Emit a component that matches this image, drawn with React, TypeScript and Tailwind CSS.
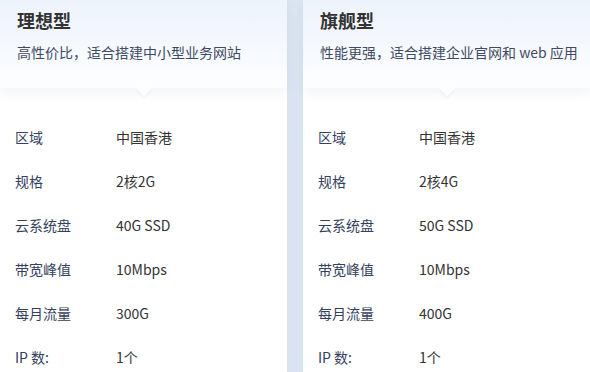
import React from "react";

type Plan = { title: string; desc: string; rows: [string, string][] };

const plans: Plan[] = [
  {
    title: "理想型",
    desc: "高性价比，适合搭建中小型业务网站",
    rows: [
      ["区域", "中国香港"],
      ["规格", "2核2G"],
      ["云系统盘", "40G SSD"],
      ["带宽峰值", "10Mbps"],
      ["每月流量", "300G"],
      ["IP 数:", "1个"],
    ],
  },
  {
    title: "旗舰型",
    desc: "性能更强，适合搭建企业官网和 web 应用",
    rows: [
      ["区域", "中国香港"],
      ["规格", "2核4G"],
      ["云系统盘", "50G SSD"],
      ["带宽峰值", "10Mbps"],
      ["每月流量", "400G"],
      ["IP 数:", "1个"],
    ],
  },
];

function Card({ plan }: { plan: Plan }) {
  return (
    <div className="flex flex-col bg-white h-full w-[287px] shrink-0">
      <div className="relative z-10 shrink-0 h-[88px] px-[17px] pt-[8px] bg-gradient-to-b from-[#edf3fc] to-[#fdfeff] shadow-[0_6px_12px_rgba(0,0,0,0.045)]">
        <div className="text-[18px] leading-[24px] font-bold text-[#333333]">{plan.title}</div>
        <div className="mt-[10px] text-[14px] leading-[20px] text-[#3f4a63] whitespace-nowrap">{plan.desc}</div>
        <div className="absolute left-1/2 -translate-x-1/2 bottom-[-6px] w-[11px] h-[11px] rotate-45 bg-[#fdfeff] shadow-[2px_2px_3px_rgba(0,0,0,0.04)]" />
      </div>
      <div className="flex flex-col shrink-0 pt-[27px] pl-[15px]">
        {plan.rows.map(([k, v]) => (
          <div key={k} className="flex items-center shrink-0 h-[44px] text-[14px]">
            <div className="w-[101px] text-[#34405c]">{k}</div>
            <div className="text-[#333333]">{v}</div>
          </div>
        ))}
      </div>
    </div>
  );
}

export default function App() {
  return (
    <div
      className="w-[590px] h-[372px] overflow-hidden flex bg-[#dae3f0]"
      style={{ fontFamily: '"Noto Sans CJK SC", "Noto Sans", sans-serif' }}
    >
      <Card plan={plans[0]} />
      <div className="w-[16px] shrink-0" />
      <Card plan={plans[1]} />
    </div>
  );
}
